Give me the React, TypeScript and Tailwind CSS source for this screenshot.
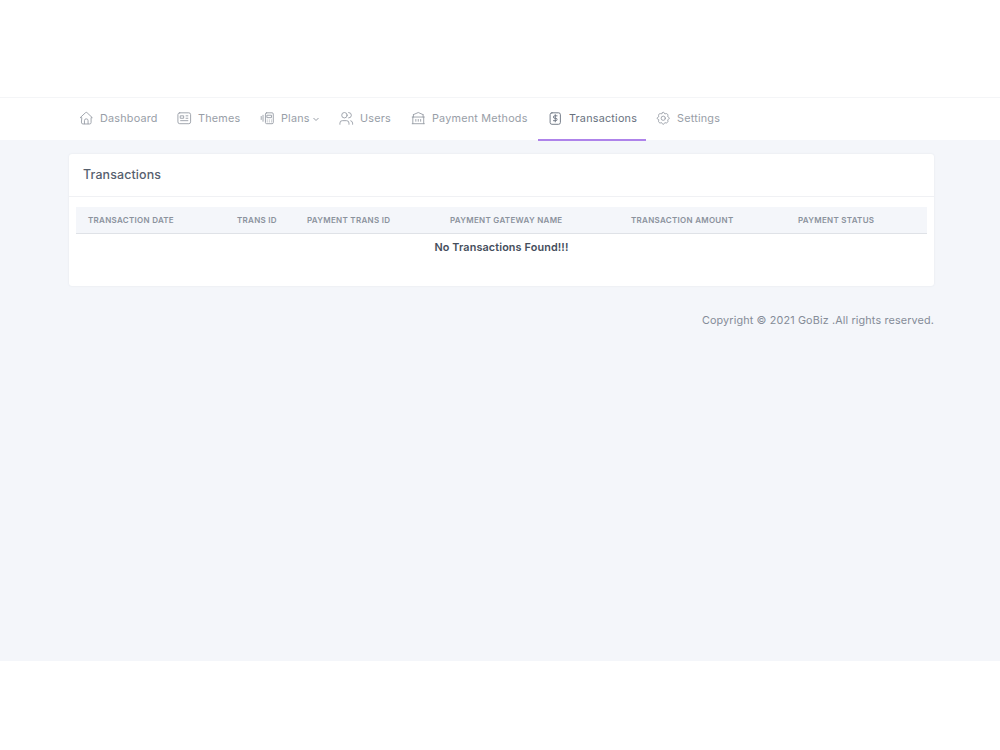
import * as React from 'react';

interface NavItem {
    label: string;
    className: string;
    icon: React.ReactNode;
    active?: boolean;
    dropdown?: boolean;
}

const navItems: NavItem[] = [
    {
        label: 'Dashboard',
        className: 'w-[98px]',
        icon: (
            <>
                <path d="M4 11H2l8.500-8a2 2 0 0 1 3 0L22 11h-2v8a2.500 2.500 0 0 1-2.500 2.500h-11A2.500 2.500 0 0 1 4 19z" />
                <path d="M9 21v-5a3 3 0 0 1 6 0v5" />
            </>
        ),
    },
    {
        label: 'Themes',
        className: 'w-[83px]',
        icon: (
            <>
                <rect x="1.500" y="3" width="21" height="18" rx="3" />
                <path d="M6 8h5v4H6zM15 8h3M15 12h3M6 16h12" />
            </>
        ),
    },
    {
        label: 'Plans',
        className: 'w-[79px]',
        dropdown: true,
        icon: (
            <>
                <rect x="9" y="3" width="13" height="18" rx="2" />
                <path d="M12 7h7v4h-7zM12 15v.01M15.500 15v.01M19 15v.01M12 18v.01M15.500 18v.01M19 18v.01M5 7v10M2 9v5" />
            </>
        ),
    },
    {
        label: 'Users',
        className: 'w-[72px]',
        icon: (
            <>
                <circle cx="9" cy="7" r="4.500" />
                <path d="M1.500 22v-2a4 4 0 0 1 4-4h7a4 4 0 0 1 4 4v2M16 2.500a4.500 4.500 0 0 1 0 9M22.500 22v-2a4 4 0 0 0-3-3.850" />
            </>
        ),
    },
    {
        label: 'Payment Methods',
        className: 'w-[137px]',
        icon: (
            <path d="M2 21h20M2 10h20M4 6l8-3.500L20 6M4 6v4M20 6v4M3 10v11M21 10v11M8 14v3M12 14v3M16 14v3" />
        ),
    },
    {
        label: 'Transactions',
        className: 'w-[108px]',
        active: true,
        icon: (
            <>
                <rect x="3.500" y="3" width="17" height="19" rx="3" />
                <path d="M15 8h-4a2 2 0 0 0 0 4h2a2 2 0 0 1 0 4H9M12 6v12" />
            </>
        ),
    },
    {
        label: 'Settings',
        className: 'w-[84px]',
        icon: (
            <>
                <path d="M10.300 3.300c.4-1.700 3-1.700 3.400 0a1.700 1.700 0 0 0 2.600 1.100c1.500-1 4.300 1.800 3.400 3.400a1.700 1.700 0 0 0 1 2.500c1.800.5 1.800 3 0 3.400a1.700 1.700 0 0 0-1 2.600c.9 1.500-1.900 4.300-3.400 3.400a1.700 1.700 0 0 0-2.600 1c-.4 1.800-3 1.800-3.400 0a1.700 1.700 0 0 0-2.600-1c-1.500.9-4.300-1.900-3.400-3.400a1.700 1.700 0 0 0-1-2.600c-1.800-.4-1.800-2.900 0-3.400a1.700 1.700 0 0 0 1-2.500c-.9-1.600 1.900-4.400 3.400-3.400 1 .6 2.300 0 2.600-1.100z" />
                <circle cx="12" cy="12" r="3.500" />
            </>
        ),
    },
];

const columns = [
    {label: 'Transaction Date', className: 'w-[149px]'},
    {label: 'Trans ID', className: 'w-[70px]'},
    {label: 'Payment Trans ID', className: 'w-[143px]'},
    {label: 'Payment Gateway Name', className: 'w-[181px]'},
    {label: 'Transaction Amount', className: 'w-[167px]'},
    {label: 'Payment Status', className: 'w-[141px]'},
];

function NavLink({item}: {item: NavItem}) {
    return (
        <a
            href="#"
            className={`flex shrink-0 items-center whitespace-nowrap pl-2.5 ${item.className} ${
                item.active
                    ? 'h-[43px] border-b-2 border-[#ae83ea] text-[#68717e]'
                    : 'h-[41px] text-[#989ea7]'
            }`}
        >
            <svg
                viewBox="0 0 24 24"
                className="mr-[6.500px] size-[14.500px] shrink-0"
                fill="none"
                stroke="currentColor"
                strokeWidth="1.5"
                strokeLinecap="round"
                strokeLinejoin="round"
            >
                {item.icon}
            </svg>
            <span className="pt-px">{item.label}</span>
            {item.dropdown && (
                <svg
                    viewBox="0 0 8 8"
                    className="ml-0.5 size-[8px]"
                    fill="none"
                    stroke="currentColor"
                >
                    <path d="M1.500 3 4 5.500 6.500 3" />
                </svg>
            )}
        </a>
    );
}

export default function App() {
    return (
        <div className="h-[750px] overflow-hidden bg-white pt-[97px] font-['Inter',sans-serif] text-[10.8px] tracking-[0.14px]">
            <div className="h-[564px] bg-[#f4f6fa]">
                <nav className="h-[42.500px] border-t border-[#f4f5f7] bg-white pl-[69px]">
                    <div className="flex h-[41px] items-start tracking-[0.22px]">
                        {navItems.map((item) => (
                            <NavLink
                                key={item.label}
                                item={item}
                            />
                        ))}
                    </div>
                </nav>

                <main className="ml-[69px] mt-[14.500px] w-[865px]">
                    <section className="h-[132px] rounded-[3px] bg-white shadow-[0_0_2px_#dfe3e9]">
                        <div className="flex h-[42.500px] items-center border-b border-[#f0f1f4] pl-3.5 pt-0.5">
                            <h3 className="text-[12.400px] font-medium text-[#56606e]">
                                Transactions
                            </h3>
                        </div>
                        <div className="px-[7px] pt-[10.500px]">
                            <table className="w-[851px] table-fixed border-collapse">
                                <thead>
                                    <tr className="h-[26px] border-b border-[#dfe2e7] bg-[#f4f6fa]">
                                        {columns.map((column) => (
                                            <th
                                                key={column.label}
                                                className={`whitespace-nowrap p-0 pl-3 text-left text-[8px] font-semibold uppercase tracking-[0.29px] text-[#8b929d] ${column.className}`}
                                            >
                                                {column.label}
                                            </th>
                                        ))}
                                    </tr>
                                </thead>
                                <tbody>
                                    <tr className="h-[29px]">
                                        <td
                                            colSpan={6}
                                            className="p-0 pt-px text-center font-semibold text-[#454e5c]"
                                        >
                                            No Transactions Found!!!
                                        </td>
                                    </tr>
                                </tbody>
                            </table>
                        </div>
                    </section>
                    <footer className="mt-[26.500px] text-right text-[#858c98]">
                        Copyright © 2021 GoBiz .All rights reserved.
                    </footer>
                </main>
            </div>
        </div>
    );
}
